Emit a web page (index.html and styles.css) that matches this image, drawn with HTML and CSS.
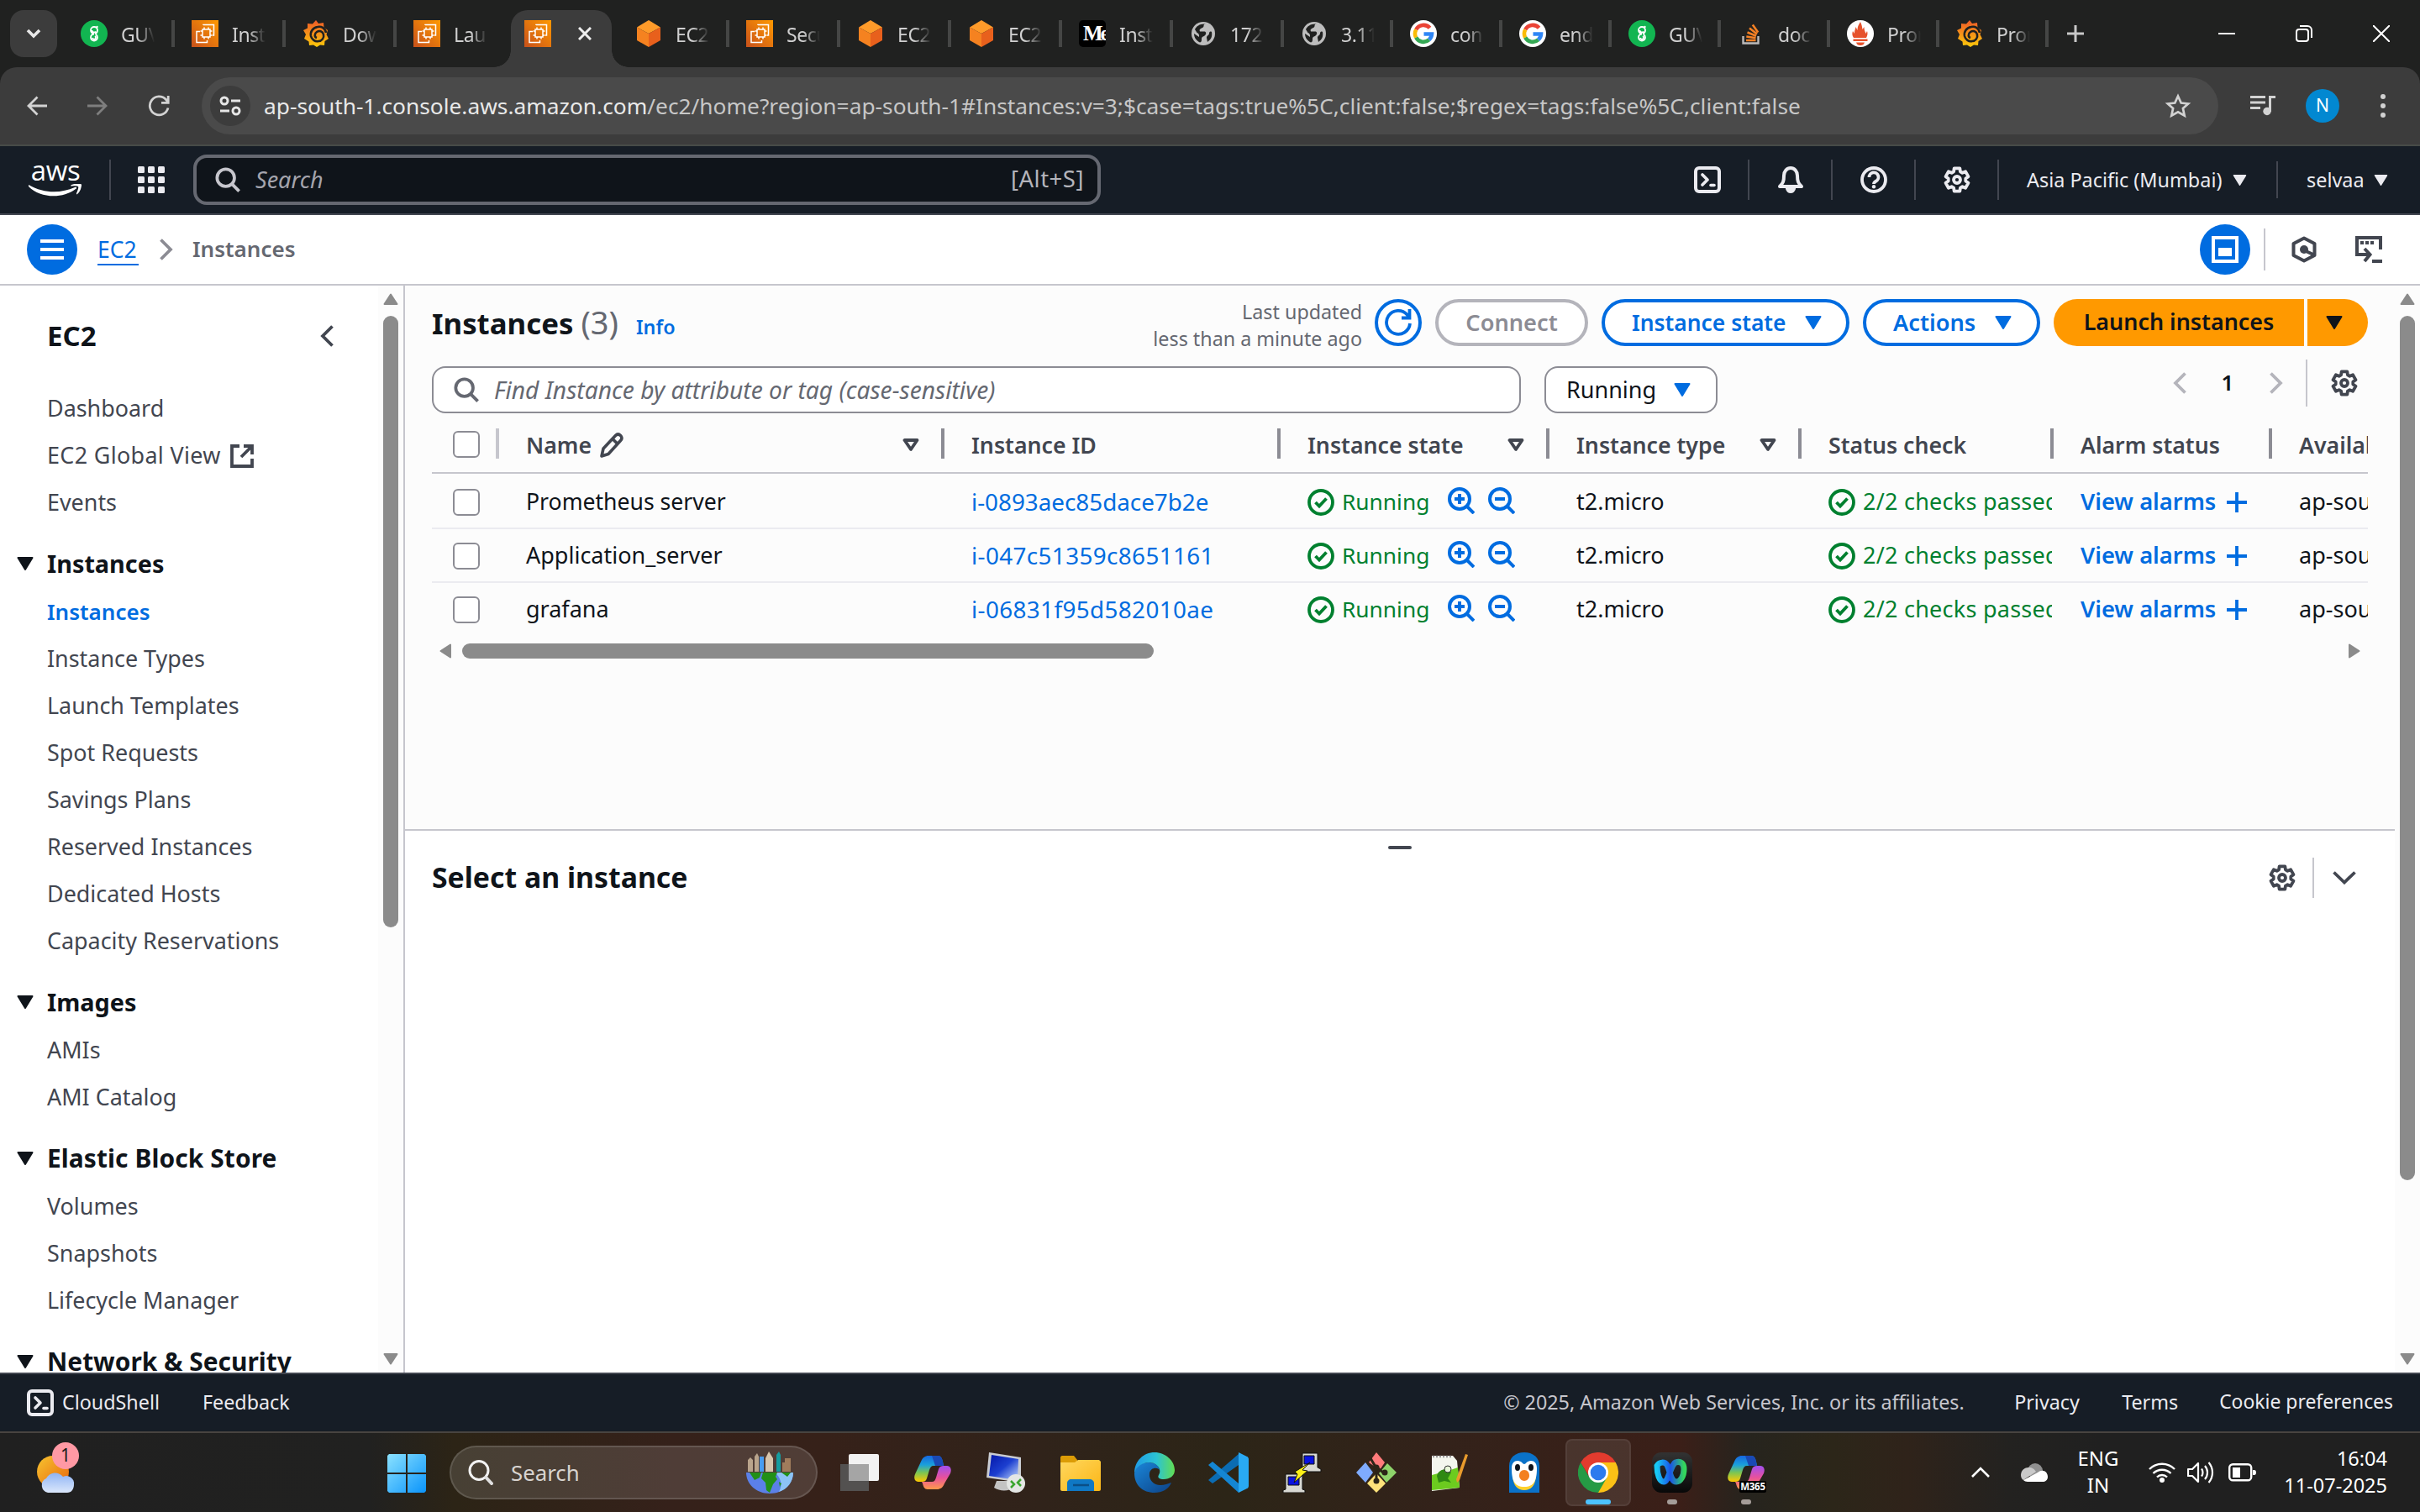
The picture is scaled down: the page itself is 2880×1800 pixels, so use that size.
FILE: index.html
```
<!DOCTYPE html>
<html lang="en">
<head>
<meta charset="utf-8">
<title>Instances | EC2 | ap-south-1</title>
<link rel="stylesheet" href="styles.css">
</head>
<body>
<svg class="defs" width="0" height="0" aria-hidden="true">
  <defs>
    <linearGradient id="gOrange" x1="0" y1="1" x2="1" y2="0"><stop offset="0" stop-color="#c8511b"/><stop offset="1" stop-color="#ff9900"/></linearGradient>
    <linearGradient id="gGraf" x1="0" y1="0" x2="0" y2="1"><stop offset="0" stop-color="#f05a28"/><stop offset="1" stop-color="#fbca0a"/></linearGradient>
    <linearGradient id="gWin" x1="0" y1="0" x2="1" y2="1"><stop offset="0" stop-color="#8be2ff"/><stop offset="1" stop-color="#0a94fb"/></linearGradient>
    <linearGradient id="gSun" x1="0" y1="0" x2="1" y2="1"><stop offset="0" stop-color="#f7c52f"/><stop offset="1" stop-color="#e8650d"/></linearGradient>
    <linearGradient id="gCloud" x1="0" y1="0" x2="0" y2="1"><stop offset="0" stop-color="#8fb4f5"/><stop offset="1" stop-color="#dbe7fb"/></linearGradient>
    <linearGradient id="gCopL" x1="0" y1="0" x2="0" y2="1"><stop offset="0" stop-color="#1667e0"/><stop offset=".35" stop-color="#1aa0dc"/><stop offset=".65" stop-color="#7bc653"/><stop offset="1" stop-color="#ffc800"/></linearGradient>
    <linearGradient id="gCopR" x1="0" y1="0" x2="0" y2="1"><stop offset="0" stop-color="#a14ff0"/><stop offset=".5" stop-color="#e8519c"/><stop offset="1" stop-color="#ff9a4a"/></linearGradient>
    <linearGradient id="gEdge" x1="0" y1="0" x2="1" y2="0"><stop offset="0" stop-color="#1f9be6"/><stop offset=".55" stop-color="#2cc3d4"/><stop offset="1" stop-color="#62dd52"/></linearGradient>
    <linearGradient id="gEdge2" x1="0" y1="0" x2="1" y2="1"><stop offset="0" stop-color="#1a86d9"/><stop offset="1" stop-color="#0d4286"/></linearGradient>
    <linearGradient id="gScreen" x1="0" y1="0" x2="1" y2="1"><stop offset="0" stop-color="#0316a8"/><stop offset=".5" stop-color="#1c3fd0"/><stop offset="1" stop-color="#c5dcff"/></linearGradient>
    <linearGradient id="gFold" x1="0" y1="0" x2="1" y2="1"><stop offset="0" stop-color="#ffd75e"/><stop offset="1" stop-color="#fbb616"/></linearGradient>
    <linearGradient id="gDark" x1="0" y1="0" x2="0" y2="1"><stop offset="0" stop-color="#333"/><stop offset="1" stop-color="#080808"/></linearGradient>
    <linearGradient id="gWebex" x1="0" y1="0" x2="1" y2="0"><stop offset="0" stop-color="#17c9f5"/><stop offset=".5" stop-color="#1a55e8"/><stop offset="1" stop-color="#34d65c"/></linearGradient>
  </defs>
  <symbol id="ec2" viewBox="0 0 32 32"><path fill="url(#gOrange)" d="M0 0h32v32H0z"/><g fill="none" stroke="#fff" stroke-width="1.500"><path d="M13 11h9v9h-9zM15 11V8.500M20 11V8.500M15 22.500V20M20 22.500V20M13 13h-2.500M13 18h-2.500M24.500 13H22M24.500 18H22M14 6V5.500h12.500V18H25M10 13.500H6V26.500h12.500V24"/></g></symbol>
  <symbol id="cube" viewBox="0 0 32 32"><path fill="#ff9b2a" d="M16 0 30 8.500 16 16 2 8.500z"/><path fill="#f58220" d="M2 8.500 16 16v16L2 24z"/><path fill="#e8601c" d="M30 8.500 16 16v16l14-8z"/></symbol>
  <symbol id="guvi" viewBox="0 0 32 32"><circle cx="16" cy="16" r="16" fill="#12b551"/><path fill="none" stroke="#fff" stroke-width="1.800" d="M16 16a4 4 0 1 1 4-4c0 2.500-1 3.600-3 4.300M16 16.500a4 4 0 1 0 4 4c0-1.600-.8-2.800-2-3.500M13.500 12a2.500 2.500 0 0 0 4.500 1.500M14 21a2 2 0 1 0 3-2"/><circle cx="19.500" cy="8" r="1.200" fill="#fff"/></symbol>
  <symbol id="graf" viewBox="0 0 32 32"><path fill="url(#gGraf)" d="m16 0 3 4 6-1 .5 5.500L30 12l-1.500 5L31 22l-4.500 3-.5 5-5-.5L17 32l-4-2.500-5 .5-.5-4.500L2 22l2-5-3-5 5-2.500L6 4l6 .5z"/><path fill="none" stroke="#202120" stroke-width="2.600" d="M28 15c-1-6-6-8-10-7-6 1-9 6-8 11 1 4 5 7 9 6 4 0 7-4 6-8s-5-5-8-3-3 6 0 7"/></symbol>
  <symbol id="globe" viewBox="0 0 28 28"><circle cx="14" cy="14" r="14" fill="#bdbdbd"/><path fill="#202120" d="M17 2.500c-4 0-1 3-4 4.500s-4 2-3 4.500h5c2 0 3 2 1.500 4-1.500 2-4.500 2-4.500 4.500s0 4-2 4.500C6 22.500 3 19 3 14l6 4c.5-3-1-4.500-2.500-5L4 9c2-4 6-7 13-6.500zM19 24c4-3 6-6 5-12-2-1-3 0-3 2-1 3-3 2-3 5z"/></symbol>
  <symbol id="goog" viewBox="0 0 32 32"><circle cx="16" cy="16" r="16" fill="#fff"/><g fill="none" stroke-width="4.600"><path stroke="#ea4335" d="M23.600 9.300A10 10 0 0 0 7.200 11.300"/><path stroke="#fbbc05" d="M7.200 11.300a10 10 0 0 0 0 9.400"/><path stroke="#34a853" d="M7.200 20.700a10 10 0 0 0 15.500 2.600"/><path stroke="#2f86f6" d="M22.700 23.300A10 10 0 0 0 26 16.500H16.500"/></g></symbol>
  <symbol id="so" viewBox="0 0 32 32"><path fill="none" stroke="#bcbbbb" stroke-width="2.400" d="M6.500 19v8.500h18V19"/><g stroke="#f48024" stroke-width="2.600"><path d="M10 24h11.500M10.300 19.500l11.200 1.700M11.500 14.500l10.500 4.300M14 9.500l9 7M17.800 5.500l6.400 9"/></g></symbol>
  <symbol id="prom" viewBox="0 0 32 32"><circle cx="16" cy="16" r="16" fill="#fff"/><path fill="#e6522c" d="M16 30a5 5 0 0 1-5-3.500h10A5 5 0 0 1 16 30zM7.500 22.500h17V25h-17zM8 21c-2-3-2-5-1-8l2 3c0-4 1-5 1.500-8l2 4c0-4 1-6 3.500-10 2 4 2 6 2.500 9l2-3c0 4 1 5 2 8l1.500-3c1 3 .5 5-1 8z"/></symbol>

  <symbol id="gear" viewBox="0 0 16 16"><path fill="none" stroke="currentColor" stroke-width="1.900" stroke-linejoin="round" d="M6.310 1.210H9.690L9.950 3.180 11.200 3.900 13.040 3.140 14.730 6.070 13.150 7.280V8.720L14.730 9.930 13.040 12.860 11.200 12.100 9.950 12.820 9.690 14.790H6.310L6.050 12.820 4.800 12.100 2.960 12.860 1.270 9.930 2.850 8.720V7.280L1.270 6.070 2.960 3.140 4.800 3.900 6.050 3.180Z"/><circle cx="8" cy="8" r="2" fill="none" stroke="currentColor" stroke-width="1.900"/></symbol>
  <symbol id="shell" viewBox="0 0 32 32"><rect x="2" y="2" width="28" height="28" rx="4" fill="none" stroke="currentColor" stroke-width="4"/><path fill="none" stroke="currentColor" stroke-width="3.600" stroke-linecap="round" stroke-linejoin="round" d="m10 10 6 6-6 6"/><path stroke="currentColor" stroke-width="3.600" stroke-linecap="round" d="M20 22.500h4"/></symbol>
  <symbol id="mag" viewBox="0 0 32 32"><circle cx="13.500" cy="13.500" r="11" fill="none" stroke="currentColor" stroke-width="4"/><path stroke="currentColor" stroke-width="4" d="m21.500 21.500 9 9"/></symbol>
  <symbol id="zin" viewBox="0 0 32 32"><circle cx="14" cy="14" r="12" fill="none" stroke="currentColor" stroke-width="4"/><path stroke="currentColor" stroke-width="4" d="m22.500 22.500 8.500 8.500M8 14h12M14 8v12"/></symbol>
  <symbol id="zout" viewBox="0 0 32 32"><circle cx="14" cy="14" r="12" fill="none" stroke="currentColor" stroke-width="4"/><path stroke="currentColor" stroke-width="4" d="m22.500 22.500 8.500 8.500M8 14h12"/></symbol>
  <symbol id="ok" viewBox="0 0 32 32"><circle cx="16" cy="16" r="14" fill="none" stroke="currentColor" stroke-width="3.800"/><path fill="none" stroke="currentColor" stroke-width="3.800" d="m9.500 16 4.500 4.500 8.500-9"/></symbol>
  <symbol id="tri" viewBox="0 0 20 16"><path fill="currentColor" stroke="currentColor" stroke-width="2" stroke-linejoin="round" d="M1.500 1h17L10 15z"/></symbol>
  <symbol id="sort" viewBox="0 0 20 16"><path fill="none" stroke="currentColor" stroke-width="3.800" stroke-linejoin="round" d="M2.500 2h15L10 13z"/></symbol>
  <symbol id="sbtri" viewBox="0 0 18 14"><path fill="currentColor" stroke="currentColor" stroke-width="2" stroke-linejoin="round" d="M1.500 13h15L9 1.500z"/></symbol>
  <symbol id="left" viewBox="0 0 16 26"><path fill="none" stroke="currentColor" stroke-width="3.800" d="M14.500 1.500 3 13l11.500 11.500"/></symbol>
  <symbol id="right" viewBox="0 0 16 26"><path fill="none" stroke="currentColor" stroke-width="3.800" d="M1.500 1.500 13 13 1.500 24.500"/></symbol>
  <symbol id="plus" viewBox="0 0 24 24"><path stroke="currentColor" stroke-width="3.800" d="M0 12h24M12 0v24"/></symbol>
  <symbol id="copilot" viewBox="0 0 48 48"><path fill="url(#gCopL)" d="M19 4h11c4 0 5 3 6 7l1 5H25c-3 0-4 2-5 5l-3 10c-1 3-3 4-6 4H7c-4 0-6-4-4-9L10 11c2-5 5-7 9-7z"/><path fill="#1a49b4" d="M23 4h7c4 0 5 3 6 7l1 5H27z"/><path fill="url(#gCopR)" d="M29 44H18c-4 0-5-3-6-7l-1-2h12c3 0 4-2 5-5l3-10c1-3 3-4 6-4h4c4 0 6 4 4 9l-7 12c-2 5-5 7-9 7z"/></symbol>
</svg>

<header class="tabstrip">
  <div class="tabmenu"><svg width="18" height="12" viewBox="0 0 18 12"><path fill="none" stroke="#e8e8e8" stroke-width="3.600" d="m2 2 7 7 7-7"/></svg></div>
  <div class="tab"><svg class="fav"><use href="#guvi"/></svg><span>GUVI</span></div>
  <div class="tab"><svg class="fav"><use href="#ec2"/></svg><span>Insta</span></div>
  <div class="tab"><svg class="fav"><use href="#graf"/></svg><span>Dow</span></div>
  <div class="tab nosep"><svg class="fav"><use href="#ec2"/></svg><span>Laun</span></div>
  <div class="tab active"><svg class="fav"><use href="#ec2"/></svg><svg class="close" viewBox="0 0 16 16"><path stroke="#eee" stroke-width="3" d="m1 1 14 14M15 1 1 15"/></svg></div>
  <div class="tab"><svg class="fav"><use href="#cube"/></svg><span>EC2 </span></div>
  <div class="tab"><svg class="fav"><use href="#ec2"/></svg><span>Secu</span></div>
  <div class="tab"><svg class="fav"><use href="#cube"/></svg><span>EC2 </span></div>
  <div class="tab"><svg class="fav"><use href="#cube"/></svg><span>EC2 </span></div>
  <div class="tab"><b class="medium">Me</b><span>Insta</span></div>
  <div class="tab"><svg class="fav pad"><use href="#globe"/></svg><span>172.</span></div>
  <div class="tab slim"><svg class="fav pad"><use href="#globe"/></svg><span>3.110</span></div>
  <div class="tab slim"><svg class="fav"><use href="#goog"/></svg><span>conn</span></div>
  <div class="tab slim"><svg class="fav"><use href="#goog"/></svg><span>endp</span></div>
  <div class="tab slim"><svg class="fav"><use href="#guvi"/></svg><span>GUVI</span></div>
  <div class="tab slim"><svg class="fav"><use href="#so"/></svg><span>dock</span></div>
  <div class="tab slim"><svg class="fav"><use href="#prom"/></svg><span>Prom</span></div>
  <div class="tab slim"><svg class="fav"><use href="#graf"/></svg><span>Prom</span></div>
  <svg class="newtab" width="20" height="20" viewBox="0 0 20 20"><path stroke="#c8c8c8" stroke-width="3" d="M0 10h20M10 0v20"/></svg>
  <div class="wincontrols">
    <svg width="20" height="20" viewBox="0 0 20 20"><path stroke="#fff" stroke-width="2" d="M0 10h20"/></svg>
    <svg width="20" height="20" viewBox="0 0 20 20"><rect x="1" y="5" width="14" height="14" rx="3" fill="none" stroke="#fff" stroke-width="2"/><path fill="none" stroke="#fff" stroke-width="2" d="M5 1h9a5 5 0 0 1 5 5v9"/></svg>
    <svg width="20" height="20" viewBox="0 0 20 20"><path stroke="#fff" stroke-width="2" d="m0 0 20 20M20 0 0 20"/></svg>
  </div>
</header>

<div class="toolbarwrap"><div class="toolbar">
  <div class="navbtns">
    <svg width="24" height="24" viewBox="0 0 24 24"><path fill="none" stroke="#d2d2d2" stroke-width="2.800" d="M24 12H2M12.500 1.500 2 12l10.500 10.500"/></svg>
    <svg width="24" height="24" viewBox="0 0 24 24"><path fill="none" stroke="#7e7e7e" stroke-width="2.800" d="M0 12h22M11.500 1.500 22 12 11.500 22.500"/></svg>
    <svg width="26" height="26" viewBox="0 0 26 26"><path fill="none" stroke="#d2d2d2" stroke-width="2.800" d="M24 15.500A11 11 0 1 1 21.500 5.500L24 8.500M24.200 1v8.300H16"/></svg>
  </div>
  <div class="omnibox">
    <div class="site"><svg width="26" height="24" viewBox="0 0 26 24"><g fill="none" stroke="#e6e6e6" stroke-width="3"><circle cx="6" cy="6" r="4"/><circle cx="20" cy="18" r="4"/><path d="M14 6h11M1 18h11"/></g></svg></div>
    <div class="url"><b>ap-south-1.console.aws.amazon.com</b>/ec2/home?region=ap-south-1#Instances:v=3;$case=tags:true%5C,client:false;$regex=tags:false%5C,client:false</div>
    <svg width="32" height="30" viewBox="0 0 32 30"><path fill="none" stroke="#d2d2d2" stroke-width="2.700" stroke-linejoin="miter" d="m16 3.500 3.700 8 8.500.9-6.300 5.700 1.800 8.500L16 22.300l-7.700 4.300 1.800-8.500-6.300-5.700 8.500-.9z"/></svg>
  </div>
  <svg class="media" width="30" height="24" viewBox="0 0 30 24"><path stroke="#d2d2d2" stroke-width="3" fill="none" d="M0 1.500h18M0 8h18M0 14.500h12M23.500 19V1.500H30"/><circle cx="20" cy="18.500" r="4.700" fill="#d2d2d2"/></svg>
  <div class="avatar">N</div>
  <svg class="dots" width="6" height="28" viewBox="0 0 6 28"><g fill="#d2d2d2"><circle cx="3" cy="3" r="3"/><circle cx="3" cy="14" r="3"/><circle cx="3" cy="25" r="3"/></g></svg>
</div></div>

<nav class="awsnav">
  <div class="awslogo"><span>aws</span><svg width="64" height="16" viewBox="0 0 64 16"><path fill="#fff" d="M0 1c19 11 39 10 55 3 2-1 3 1 1 2C40 18 14 17 0 3c-1-1-1-2 0-2zM51 1c5-2 12-2 12 0s-1 8-5 11c-1 1-1 0-1-1 1-2 3-7 2-8s-5-1-8-.5c-1 0-1-1 0-1.500z"/></svg></div>
  <i class="vr"></i>
  <svg class="apps" width="32" height="32" viewBox="0 0 32 32"><g fill="#ebebf0"><rect width="8" height="8" rx="1.500"/><rect x="12" width="8" height="8" rx="1.500"/><rect x="24" width="8" height="8" rx="1.500"/><rect y="12" width="8" height="8" rx="1.500"/><rect x="12" y="12" width="8" height="8" rx="1.500"/><rect x="24" y="12" width="8" height="8" rx="1.500"/><rect y="24" width="8" height="8" rx="1.500"/><rect x="12" y="24" width="8" height="8" rx="1.500"/><rect x="24" y="24" width="8" height="8" rx="1.500"/></g></svg>
  <div class="awssearch"><svg width="30" height="30"><use href="#mag"/></svg><em>Search</em><span>[Alt+S]</span></div>
  <div class="awstools">
    <svg class="ic"><use href="#shell"/></svg><i class="vr"></i>
    <svg class="ic" viewBox="0 0 32 32"><path fill="none" stroke="currentColor" stroke-width="4" stroke-linejoin="round" d="M3 24c4-4 5-6 5-13 0-5 3.500-9 8-9s8 4 8 9c0 7 1 9 5 13z"/><path fill="currentColor" d="M10 25h12v2c-1 3-3 5-6 5s-5-2-6-5z"/></svg><i class="vr"></i>
    <svg class="ic" viewBox="0 0 32 32"><circle cx="16" cy="16" r="14" fill="none" stroke="currentColor" stroke-width="3.800"/><path fill="none" stroke="currentColor" stroke-width="3.800" d="M10.500 13a5.500 5.500 0 1 1 8 4.700c-2 1-2.500 1.600-2.500 3.300"/><circle cx="16" cy="24.300" r="2.200" fill="currentColor"/></svg><i class="vr"></i>
    <svg class="ic"><use href="#gear"/></svg><i class="vr"></i>
    <span class="region">Asia Pacific (Mumbai)</span><svg class="navtri"><use href="#tri"/></svg><i class="vr wide"></i>
    <span class="user">selvaa</span><svg class="navtri"><use href="#tri"/></svg>
  </div>
</nav>

<div class="crumbs">
  <div class="round"><svg width="28" height="24" viewBox="0 0 28 24"><path stroke="#fff" stroke-width="4" d="M0 2h28M0 12h28M0 22h28"/></svg></div>
  <a>EC2</a>
  <svg class="sep" width="16" height="26"><use href="#right"/></svg>
  <strong>Instances</strong>
  <div class="crumbtools">
    <div class="round"><svg width="32" height="32" viewBox="0 0 32 32"><rect x="2" y="2" width="28" height="28" fill="none" stroke="#fff" stroke-width="4"/><path fill="#fff" d="M8 14h16v10H8z"/></svg></div>
    <i class="vr light"></i>
    <svg width="30" height="32" viewBox="0 0 30 32"><path fill="none" stroke="#424650" stroke-width="4" stroke-linejoin="round" d="M15 2.500 27.500 9v14L15 29.500 2.500 23V9z"/><circle cx="15" cy="16" r="5" fill="#424650"/><path stroke="#424650" stroke-width="4" d="m15 17 11 5"/></svg>
    <svg class="term" width="32" height="32" viewBox="0 0 32 32"><path fill="none" stroke="#424650" stroke-width="4" d="M30 16V2H2v20h15M11 15l6.500 7-6.500 8"/><path fill="#424650" d="M6 6h4v4H6zM12 6h4v4h-4zM18 6h4v4h-4zM20 28h12v4H20z"/></svg>
  </div>
</div>

<main class="content">
  <aside class="side">
    <div class="sidebody">
      <div class="sidehead"><h2>EC2</h2><svg width="16" height="26"><use href="#left"/></svg></div>
      <a>Dashboard</a>
      <a class="global">EC2 Global View <svg class="ext" width="28" height="28" viewBox="0 0 28 28"><path fill="none" stroke="currentColor" stroke-width="3.800" d="M11 2H2v24h24V17M16 2h10v10M26 2 13 15"/></svg></a>
      <a>Events</a>
      <h3><svg><use href="#tri"/></svg><span class="tight">Instances</span></h3>
      <a class="on">Instances</a><a>Instance Types</a><a>Launch Templates</a><a>Spot Requests</a><a>Savings Plans</a><a>Reserved Instances</a><a>Dedicated Hosts</a><a>Capacity Reservations</a>
      <h3><svg><use href="#tri"/></svg><span class="tight">Images</span></h3>
      <a>AMIs</a><a>AMI Catalog</a>
      <h3><svg><use href="#tri"/></svg><span class="loose">Elastic Block Store</span></h3>
      <a>Volumes</a><a>Snapshots</a><a>Lifecycle Manager</a>
      <h3><svg><use href="#tri"/></svg><span>Network &amp; Security</span></h3>
    </div>
    <div class="vscroll"><svg><use href="#sbtri"/></svg><div class="track"><div class="thumb short"></div></div><svg class="down"><use href="#sbtri"/></svg></div>
  </aside>

  <section class="pane">
    <div class="upper">
      <div class="titlebar">
        <h1>Instances <span>(3)</span></h1><a class="info">Info</a>
        <div class="updated">Last updated<br>less than a minute ago</div>
        <div class="btn refresh"><svg width="34" height="34" viewBox="0 0 34 34"><path fill="none" stroke="currentColor" stroke-width="3.800" d="M31 18a14 14 0 1 1-3.500-10.500L30 10.500M30.500 1v10.500H21"/></svg></div>
        <div class="btn off">Connect</div>
        <div class="btn">Instance state<svg><use href="#tri"/></svg></div>
        <div class="btn actions">Actions<svg><use href="#tri"/></svg></div>
        <div class="launch"><span>Launch instances</span><span class="more"><svg><use href="#tri"/></svg></span></div>
      </div>
      <div class="filters">
        <div class="field find"><svg width="30" height="30"><use href="#mag"/></svg><em>Find Instance by attribute or tag (case-sensitive)</em></div>
        <div class="field pick">Running<svg><use href="#tri"/></svg></div>
        <div class="pager"><svg width="16" height="26"><use href="#left"/></svg><b>1</b><svg width="16" height="26"><use href="#right"/></svg><i></i><svg class="cog" width="32" height="32"><use href="#gear"/></svg></div>
      </div>
      <div class="table">
        <div class="tr th">
          <div class="check"><i></i></div>
          <div>Name<svg class="pen" width="28" height="30" viewBox="0 0 28 30"><path fill="none" stroke="currentColor" stroke-width="3.600" stroke-linejoin="round" d="M2 28l2-9L18.500 3.500c2-2 4-2 6 0s2 4 0 6L10 25.500zM15 7.500l6 6"/></svg><svg class="sort"><use href="#sort"/></svg></div>
          <div>Instance ID</div>
          <div>Instance state<svg class="sort"><use href="#sort"/></svg></div>
          <div>Instance type<svg class="sort"><use href="#sort"/></svg></div>
          <div>Status check</div><div>Alarm status</div><div>Availability Zone</div>
        </div>
        <div class="tr first">
          <div class="check"><i></i></div><div class="nm">Prometheus server</div><div class="id">i-0893aec85dace7b2e</div>
          <div class="state"><svg><use href="#ok"/></svg>Running<svg class="z1"><use href="#zin"/></svg><svg class="z2"><use href="#zout"/></svg></div>
          <div>t2.micro</div><div class="good"><svg><use href="#ok"/></svg>2/2 checks passed</div>
          <div class="alarm">View alarms<svg><use href="#plus"/></svg></div><div>ap-south-1a</div>
        </div>
        <div class="tr">
          <div class="check"><i></i></div><div>Application_server</div><div class="id digits">i-047c51359c8651161</div>
          <div class="state"><svg><use href="#ok"/></svg>Running<svg class="z1"><use href="#zin"/></svg><svg class="z2"><use href="#zout"/></svg></div>
          <div>t2.micro</div><div class="good"><svg><use href="#ok"/></svg>2/2 checks passed</div>
          <div class="alarm">View alarms<svg><use href="#plus"/></svg></div><div>ap-south-1a</div>
        </div>
        <div class="tr last">
          <div class="check"><i></i></div><div>grafana</div><div class="id digits">i-06831f95d582010ae</div>
          <div class="state"><svg><use href="#ok"/></svg>Running<svg class="z1"><use href="#zin"/></svg><svg class="z2"><use href="#zout"/></svg></div>
          <div>t2.micro</div><div class="good"><svg><use href="#ok"/></svg>2/2 checks passed</div>
          <div class="alarm">View alarms<svg><use href="#plus"/></svg></div><div>ap-south-1a</div>
        </div>
      </div>
      <div class="hscroll"><svg width="14" height="18" viewBox="0 0 14 18"><path fill="#8b8b8b" stroke="#8b8b8b" stroke-width="2" stroke-linejoin="round" d="M13 1.500v15L1.500 9z"/></svg><div class="hthumb"></div><svg width="14" height="18" viewBox="0 0 14 18"><path fill="#8b8b8b" stroke="#8b8b8b" stroke-width="2" stroke-linejoin="round" d="M1 1.500v15L12.500 9z"/></svg></div>
    </div>
    <div class="split">
      <i class="grip"></i>
      <div class="splithead"><h2>Select an instance</h2><svg width="32" height="32"><use href="#gear"/></svg><i></i><svg width="28" height="16" viewBox="0 0 28 16"><path fill="none" stroke="currentColor" stroke-width="3.800" d="m1.500 1.500 12.500 12 12.500-12"/></svg></div>
    </div>
  </section>
  <div class="vscroll page"><svg><use href="#sbtri"/></svg><div class="track"><div class="thumb long"></div></div><svg class="down"><use href="#sbtri"/></svg></div>
</main>

<footer class="awsfoot">
  <svg width="32" height="32"><use href="#shell"/></svg><span class="cs">CloudShell</span><span class="fb">Feedback</span>
  <span class="copy">© 2025, Amazon Web Services, Inc. or its affiliates.</span>
  <span class="pr">Privacy</span><span class="te">Terms</span><span class="co">Cookie preferences</span>
</footer>

<div class="taskbar">
  <div class="weather"><svg width="48" height="48" viewBox="0 0 48 48"><circle cx="19" cy="23" r="19" fill="url(#gSun)"/><path fill="url(#gCloud)" d="M13 48a9 9 0 0 1-2-17 12 12 0 0 1 20-2 9 9 0 0 1 13 9c0 6-3 10-8 10z"/></svg><b>1</b></div>
  <svg class="start" width="46" height="46" viewBox="0 0 46 46"><path fill="url(#gWin)" d="M2 0h20v22H0V2zM24 0h20l2 2v20H24zM0 24h22v22H2l-2-2zM24 24h22v20l-2 2H24z"/></svg>
  <div class="tasksearch"><svg width="30" height="30" viewBox="0 0 30 30"><circle cx="13" cy="12.500" r="11" fill="none" stroke="#f2f2f2" stroke-width="3"/><path stroke="#e0e0e0" stroke-width="4" stroke-linecap="round" d="m21.500 21 6.500 7"/></svg><span>Search</span>
    <svg class="earth" width="56" height="50" viewBox="0 0 56 50"><path fill="#b9a48c" d="M2 24V10l3-3 3 3v14zM10 24V6l3-4 2 4v18z"/><path fill="#4a9df0" d="M16 24V6h5v18z"/><path fill="#d8c5ac" d="M23 24V8l4-8 5 8v16z"/><path fill="#159c9f" d="M36 24V4l3-4 2 4v20z"/><path fill="#a07c5c" d="M43 24V13h3V8h7v16z"/><path fill="#5b80e8" d="M0 25h56c0 14-12 25-28 25S0 39 0 25z"/><path fill="#8cc3f5" d="M34 25h22c0 11-7 20-17 23 5-9 2-17-5-23z"/><path fill="#229018" d="M4 25h14l-2 6-6 3zM20 25h17l-2 5 2 3-5 6-4 10-4-3-1-9-5-5zM42 25h11l-4 5zM39 36l3 2-2 4z"/></svg>
  </div>
  <div class="apps-row">
    <div class="app"><svg viewBox="0 0 48 48"><rect x="12" y="2" width="36" height="32" rx="2" fill="#f2f2f2"/><path fill="#565656" fill-opacity=".9" d="M2 14h10v20h24v12H2z"/><path fill="#a5a5a5" d="M12 14h24v20H12z"/></svg></div>
    <div class="app"><svg viewBox="0 0 48 48"><use href="#copilot"/></svg></div>
    <div class="app"><svg viewBox="0 0 48 48"><path fill="#c9ccd2" d="M3 0 41 6v30L0 30z"/><path fill="url(#gScreen)" d="m6 3 32 5-1 25L3 28z"/><path fill="#c3c3c3" d="M12 34h18l2 8c-4 4-16 5-23 0z"/><circle cx="35" cy="37" r="11" fill="#e4e6e4"/><path fill="none" stroke="#3aa52e" stroke-width="2.500" d="m29 34 4 4-4 4M41 32l-4 4 4 4"/></svg></div>
    <div class="app"><svg viewBox="0 0 48 48"><path fill="#dc9c06" d="M0 6c0-1 1-2 2-2h14l4 5v6H0z"/><path fill="url(#gFold)" d="M0 12h17l4-3h25l2 2v33c0 1-1 2-2 2H2c-1 0-2-1-2-2z"/><path fill="#0f78c4" d="M8 46V37c0-3 2-5 5-5h21c4 0 6 2 6 5v9z"/><path stroke="#0b4f86" stroke-width="2.500" d="M15 39h19"/></svg></div>
    <div class="app"><svg viewBox="0 0 48 48"><path fill="url(#gEdge2)" d="M0 25C2 16 9 12 17 12c8 0 12 4 13 9-3-4-11-3-12 4-1 8 5 14 13 14 5 0 9-2 13-3-3 8-11 12-20 12C10 48 0 39 0 25z"/><path fill="url(#gEdge)" d="M0 25C0 10 11 0 24 0s24 10 24 21c0 7-6 11-13 11-5 0-8-2-6-5 4-6-1-15-12-15C10 12 2 17 0 25z"/></svg></div>
    <div class="app"><svg viewBox="0 0 48 48"><path fill="#0b6cb3" d="m36 2-36 31 5 4 31-22z"/><path fill="#1486d3" d="m0 15 5-4 31 26v11z"/><path fill="#29a9f3" d="m36 0 10 5c1 0 2 2 2 3v32c0 1-1 3-2 3l-10 5z"/></svg></div>
    <div class="app"><svg viewBox="0 0 48 48"><g stroke="#111" stroke-width="1"><path fill="#d9d9d3" d="M24 1h18v17l4 2v3H22v-3l2-2zM4 26h20v18l3 1v3H1v-3l3-1z"/><path fill="#0a13e0" d="M26 4h12v10H26zM7 29h13v10H7z"/><path fill="#ffef17" d="M33 12 15 23l3 3-4 10 16-14-6-1z"/></g></svg></div>
    <div class="app"><svg viewBox="0 0 48 48"><path fill="#ff7b7b" d="m24 0 10 12-6 9-13-9z"/><path fill="#7fabff" d="M11 12 0 24l11 12 9-12z"/><path fill="#8ed36a" d="m37 13 11 11-12 12-9-11z"/><path fill="#ffe27a" d="m24 25 11 12-11 11-11-11z"/><path fill="none" stroke="#2b2417" stroke-width="3" d="m17 7 7 12v17M24 17l9 8"/><g fill="#2b2417"><circle cx="24" cy="18" r="3.500"/><circle cx="24" cy="34" r="3.500"/><circle cx="34" cy="24" r="3.500"/></g></svg></div>
    <div class="app"><svg viewBox="0 0 48 48"><path fill="#f4f6ee" d="M2 4h25l5 6 3 32-33 4z"/><path fill="#6ccb1f" d="M2 27c10-3 20-5 31-9l2 24-33 3z"/><path stroke="#999" stroke-width="2.500" stroke-dasharray="2 2" d="M3 5h24"/><path fill="#2f8912" d="M8 28c2-9 14-10 17-4l-4 7 4 5-8-2-7 2z"/><circle cx="21" cy="20" r="4" fill="#e8f8d8" stroke="#333"/><path fill="#e99b2c" d="m42 2 3 1-10 30-3 3-1-4z"/></svg></div>
    <div class="app"><svg viewBox="0 0 48 48"><path fill="#0a72c9" d="M6 48V16C6 6 14 0 24 0s18 6 18 16v32z"/><path fill="#ffd02b" d="M10 28c1 12 6 17 14 17s13-5 14-17z"/><path fill="#fff" d="M9 19c0-6 3-9 7-9 5 0 6 4 8 4s3-4 8-4c4 0 7 3 7 9 0 14-3 22-15 22S9 33 9 19z"/><ellipse cx="16" cy="18" rx="3" ry="4" fill="#10141c"/><ellipse cx="32" cy="18" rx="3" ry="4" fill="#10141c"/><path fill="#f38020" d="M24 21c4 0 6 3 6 7 0 3-3 6-6 6s-6-3-6-6c0-4 2-7 6-7z"/></svg></div>
    <div class="app current"><svg viewBox="0 0 48 48"><path fill="#fbc116" d="M24 12h20.800A24 24 0 0 1 23 48z"/><path fill="#269a45" d="M3.200 12 13.600 30 34.400 30 24 48A24 24 0 0 1 3.200 12z"/><path fill="#e33b2e" d="M3.200 12A24 24 0 0 1 44.800 12H24v5l-10 13z"/><circle cx="24" cy="24" r="12" fill="#fff"/><circle cx="24" cy="24" r="9.300" fill="#2c7bee"/></svg><i></i></div>
    <div class="app"><svg viewBox="0 0 48 48"><rect width="48" height="48" rx="11" fill="url(#gDark)"/><path fill="none" stroke="url(#gWebex)" stroke-width="7" stroke-linecap="round" d="M6 16c0 10 3 19 8 19 6 0 8-20 14-23 6-2 10 1 10 8 0 8-4 15-9 15-7 0-7-12-11-20-3-4-9-4-12 1z"/></svg><i></i></div>
    <div class="app"><svg viewBox="0 0 48 48"><use href="#copilot"/></svg><b>M365</b><i></i></div>
  </div>
  <div class="tray">
    <svg width="22" height="14" viewBox="0 0 22 14"><path fill="none" stroke="#fff" stroke-width="2.600" d="m1 12 10-10 10 10"/></svg>
    <svg class="od" width="32" height="22" viewBox="0 0 32 22"><circle cx="17" cy="9" r="9" fill="#909090"/><path fill="#c9c9c9" d="M0 14c0-6 5-9 9-9 5 0 7 2 9 5L3 20c-2-1-3-4-3-6z"/><path fill="#fff" d="M3 20 20 11c6-5 12-1 12 5 0 4-3 6-6 6H8c-2 0-4-1-5-2z"/></svg>
    <div class="lang">ENG<br>IN</div>
    <svg class="wifi" width="32" height="24" viewBox="0 0 32 24"><g fill="none" stroke="#fff" stroke-width="2.400"><path d="M1 8a21 21 0 0 1 30 0M5.500 13a15 15 0 0 1 21 0M10 17.500a8.500 8.500 0 0 1 12 0"/></g><circle cx="16" cy="21" r="3" fill="#fff"/></svg>
    <svg class="vol" width="34" height="26" viewBox="0 0 34 26"><g fill="none" stroke="#fff" stroke-width="2.200" stroke-linejoin="round"><path d="M1 9h5l7-7v22l-7-7H1zM17 8.500c2 2.500 2 6.500 0 9M21 5c4 4.500 4 11.500 0 16M25.500 1c6 7 6 17 0 24"/></g></svg>
    <svg class="bat" width="34" height="22" viewBox="0 0 34 22"><rect x="1.200" y="1.200" width="26" height="19" rx="4" fill="none" stroke="#fff" stroke-width="2.400"/><path fill="#fff" d="M5 5h9v12H5zM29 8h2c1 0 2 1 2 3s-1 3-2 3h-2z"/></svg>
    <div class="clock">16:04<br>11-07-2025</div>
  </div>
</div>
</body>
</html>
```
FILE: styles.css
```
* { box-sizing: border-box; }
html, body { margin: 0; }
body {
  width: 2880px; height: 1800px; overflow: hidden;
  display: flex; flex-direction: column;
  font: 27px/1 "Noto Sans", "Open Sans", sans-serif;
  color: #0f141a; background: #fff;
}
svg { display: block; flex: none; }
.defs { position: absolute; }
h1, h2, h3 { margin: 0; }
i { font-style: normal; flex: none; }

/* Browser tab strip */
.tabstrip { height: 80px; background: #202120; display: flex; align-items: center; flex: none; }
.tabmenu { width: 56px; height: 56px; margin: 0 8px 0 12px; border-radius: 16px; background: #3c3c3c; display: flex; align-items: center; justify-content: center; }
.tab { width: 132px; height: 32px; padding-left: 20px; border-right: 4px solid #454645; display: flex; align-items: center; gap: 16px; flex: none; }
.tab.slim { width: 130px; }
.tab.nosep { border-right-color: transparent; }
.tab span { width: 40px; height: 34px; line-height: 36px; overflow: hidden; white-space: nowrap; font-size: 23px; letter-spacing: -.4px; color: #d0d0d0; -webkit-mask-image: linear-gradient(90deg, #000 50%, transparent); mask-image: linear-gradient(90deg, #000 50%, transparent); }
.fav { width: 32px; height: 32px; }
.fav.pad { padding: 2px; }
.medium { width: 32px; height: 32px; padding-left: 5px; border-radius: 5px; background: #000; color: #fff; overflow: hidden; font: bold 25px/32px "Liberation Serif", serif; letter-spacing: -3px; flex: none; }
.tab.active { width: 120px; height: 68px; align-self: flex-end; margin: 0 8px 0 4px; padding-left: 16px; border: 0; gap: 32px; border-radius: 20px 20px 0 0; background: #3c3c3c; position: relative; }
.tab.active .fav, .tab.active .close { margin-top: -12px; }
.tab.active .close { width: 16px; height: 16px; }
.tab.active::before, .tab.active::after { content: ""; position: absolute; bottom: 0; width: 20px; height: 20px; }
.tab.active::before { left: -20px; background: radial-gradient(circle at 0 0, transparent 19.5px, #3c3c3c 20px); }
.tab.active::after { right: -20px; background: radial-gradient(circle at 100% 0, transparent 19.5px, #3c3c3c 20px); }
.newtab { margin-left: 22px; }
.wincontrols { margin: 0 36px 0 auto; display: flex; gap: 72px; }

/* Browser toolbar */
.toolbarwrap { height: 94px; background: #202120; flex: none; }
.toolbar { height: 94px; background: #3c3c3c; border-bottom: 2px solid #474b48; border-radius: 20px 20px 0 0; display: flex; align-items: center; }
.navbtns { width: 240px; padding-left: 32px; display: flex; align-items: center; gap: 48px; }
.omnibox { width: 2400px; height: 68px; border-radius: 34px; background: #4a4a4a; display: flex; align-items: center; padding: 0 32px 0 10px; }
.site { width: 48px; height: 48px; border-radius: 50%; background: #3c3c3c; display: flex; align-items: center; justify-content: center; }
.url { flex: 1; margin-left: 16px; font-size: 26.3px; line-height: 48px; color: #c7c7c7; white-space: nowrap; }
.url b { font-weight: 400; color: #e9e9e9; }
.media { margin-left: 38px; }
.avatar { width: 40px; height: 40px; margin-left: 36px; border-radius: 50%; background: #0288d1; color: #fff; font-size: 21px; line-height: 39px; text-align: center; }
.dots { margin-left: 49px; }

/* AWS navigation */
.awsnav { height: 82px; flex: none; background: #161d26; border-bottom: 2px solid #424650; display: flex; align-items: center; color: #ebebf0; }
.awslogo { width: 64px; margin-left: 34px; height: 42px; display: flex; flex-direction: column; align-items: center; }
.awslogo span { font: 500 33px/26px "Open Sans", sans-serif; height: 28px; margin-top: -3px; letter-spacing: -.3px; color: #fff; }
.awslogo svg { margin-top: 1px; }
.vr { width: 2px; height: 48px; background: #424650; }
.awslogo + .vr { margin-left: 32px; }
.apps { margin-left: 32px; }
.awssearch { width: 1080px; height: 60px; margin-left: 34px; padding: 0 16px 0 22px; border: 4px solid #656871; border-radius: 16px; background: #0f141a; display: flex; align-items: center; color: #c6c6cd; line-height: 44px; }
.awssearch em { margin-left: 18px; font-size: 27px; color: #a4a4ad; }
.awssearch span { margin-left: auto; font-size: 27.5px; letter-spacing: .5px; padding-bottom: 3px; color: #b4b4bb; }
.awstools { margin: 0 38px 0 auto; display: flex; align-items: center; }
.ic { width: 32px; height: 32px; }
.awstools .vr { margin: 0 33px 0 32px; }
.awstools span { font-size: 23.4px; line-height: 40px; padding-bottom: 1px; white-space: nowrap; }
.region { width: 245px; }
.user { width: 80px; }
.navtri { width: 17px; height: 13px; }
.awstools .vr.wide { margin: 0 34px 0 35px; height: 44px; }

/* Breadcrumbs */
.crumbs { height: 84px; flex: none; border-bottom: 2px solid #c6c6cd; padding-left: 32px; display: flex; align-items: center; color: #656871; }
.round { width: 60px; height: 60px; border-radius: 50%; background: #006ce0; display: flex; align-items: center; justify-content: center; }
.crumbs a { width: 49px; margin: 2px 0 0 24px; font-size: 26.5px; line-height: 34px; color: #006ce0; border-bottom: 2px solid #006ce0; }
.crumbs .sep { margin: 0 23px 0 25px; color: #8c8c94; }
.crumbs strong { font-size: 26px; line-height: 40px; font-weight: 600; padding-bottom: 2px; }
.crumbtools { margin: 0 45px 0 auto; display: flex; align-items: center; }
.vr.light { height: 50px; background: #c6c6cd; margin: 0 31px 0 16px; }
.term { margin-left: 46px; }

/* Content */
.content { height: 1294px; flex: none; display: flex; overflow: hidden; }
.side { width: 482px; border-right: 2px solid #c6c6cd; display: flex; flex: none; }
.sidebody { width: 450px; padding-left: 56px; overflow: hidden; color: #424650; }
.sidehead { height: 118px; padding: 2px 53px 0 0; display: flex; align-items: center; justify-content: space-between; }
.sidehead h2 { font-size: 33px; line-height: 60px; color: #0f141a; }
.side a { height: 56px; line-height: 56px; display: flex; align-items: center; white-space: nowrap; font-size: 26.9px; }
.side a.on { color: #006ce0; font-weight: 600; font-size: 26px; }
.side a.global { letter-spacing: .35px; }
.ext { margin: 2px 0 0 11px; }
.side h3 { height: 58px; margin: 16px 0 0 -36px; display: flex; align-items: center; gap: 16px; font-size: 29.9px; line-height: 58px; color: #0f141a; white-space: nowrap; }
.side h3 svg { width: 20px; height: 16px; }
.tight { font-size: 28.8px; }
.loose { letter-spacing: .1px; }
.vscroll { width: 30px; height: 1294px; padding: 9px 6px 9px; background: #fcfcfc; color: #8b8b8b; display: flex; flex-direction: column; flex: none; }
.vscroll svg { width: 18px; height: 14px; }
.vscroll .down { transform: rotate(180deg); }
.track { flex: 1; padding-top: 13px; }
.thumb { width: 18px; border-radius: 9px; background: #8b8b8b; }
.short { height: 728px; }
.long { height: 1029px; }

.pane { width: 2368px; display: flex; flex-direction: column; }
.upper { height: 647px; background: #fcfcfc; padding: 16px 32px 0; }
.titlebar { height: 56px; display: flex; align-items: center; }
h1 { width: 243px; font-size: 34.8px; line-height: 56px; white-space: nowrap; padding-bottom: 1px; }
h1 span { font-weight: 400; color: #656871; font-size: 38px; }
.info { font-size: 23.3px; line-height: 40px; font-weight: 600; color: #006ce0; padding-top: 9px; }
.updated { margin: 5px 15px 0 auto; font-size: 23.3px; line-height: 32px; text-align: right; color: #656871; }
.btn { width: 295px; height: 56px; padding: 0 29px 1px 32px; margin-right: 16px; border: 4px solid #006ce0; border-radius: 28px; background: #fff; color: #006ce0; font-weight: 600; font-size: 26.4px; line-height: 46px; display: flex; align-items: center; white-space: nowrap; }
.btn > svg { width: 20px; height: 16px; margin-left: auto; margin-top: 1px; }
.btn.actions { width: 211px; padding-right: 30px; font-size: 27.2px; }
.btn.off { width: 182px; padding: 0 0 1px; justify-content: center; border-color: #b4b4bb; color: #8c8c94; font-size: 27.2px; }
.btn.refresh { width: 56px; padding: 0; justify-content: center; }
.btn.refresh svg { width: 34px; height: 34px; margin: 0; }
.launch { width: 374px; height: 56px; display: flex; gap: 4px; border-radius: 28px; overflow: hidden; font-weight: 600; font-size: 26.9px; line-height: 53px; }
.launch span { width: 298px; background: #f90; text-align: center; white-space: nowrap; }
.launch .more { width: 72px; display: flex; align-items: center; padding-left: 22px; }
.more svg { width: 20px; height: 16px; }

.filters { height: 80px; padding-top: 24px; display: flex; }
.field { height: 56px; border: 2px solid #8c8c94; border-radius: 16px; background: #fff; display: flex; align-items: center; line-height: 48px; padding: 0 24px; }
.find { width: 1296px; color: #656871; }
.find em { font-size: 28.2px; margin-left: 18px; padding-bottom: 1px; white-space: nowrap; }
.pick { width: 206px; margin-left: 28px; }
.pick svg { width: 20px; height: 16px; color: #006ce0; margin: 0 6px 0 auto; }
.pager { margin: -8px 12px 0 auto; height: 56px; display: flex; align-items: center; color: #b4b4bb; }
.pager b { margin: -2px 42px 0 41px; font-size: 26px; width: 16px; text-align: center; line-height: 40px; color: #0f141a; font-weight: 600; }
.pager i { width: 2px; height: 56px; background: #c6c6cd; margin: 0 28px 0 27px; }
.pager .cog { color: #424650; }

.table { overflow: hidden; }
.tr { display: grid; grid-template-columns: 80px 530px 400px 320px 300px 300px 260px 400px; height: 64px; border-bottom: 2px solid #ebebf0; }
.tr > div { padding-left: 32px; display: flex; align-items: center; white-space: nowrap; overflow: hidden; line-height: 60px; height: 62px; }
.tr > .check { padding: 2px 0 0 25px; }
.check i { width: 32px; height: 32px; border: 2px solid #8c8c94; border-radius: 6px; background: #fff; }
.tr.first { height: 66px; padding-top: 2px; }
.tr.last { border-bottom: 0; height: 62px; }
.tr > .nm { font-size: 26.6px; }
.tr.th { height: 72px; border-bottom-color: #c6c6cd; }
.tr.th > div { height: 58px; margin-top: 4px; padding-top: 10px; position: relative; font-weight: 600; font-size: 26.7px; color: #424650; }
.tr.th > .check { padding-top: 8px; }
.th > div::after { content: ""; position: absolute; right: 0; top: 14px; width: 4px; height: 36px; background: #8c8c94; }
.th > .check::after { background: #c6c6cd; }
.pen { margin-left: 10px; }
.sort { width: 20px; height: 16px; margin: 0 30px 0 auto; }
.id { color: #006ce0; font-size: 27.8px; }
.digits { letter-spacing: .4px; }
.state, .good { color: #00802f; }
.state svg, .good svg { width: 32px; height: 32px; margin: 1px 9px 0 0; }
.tr > .state { font-size: 26.3px; }
.state .z1, .state .z2 { color: #006ce0; margin: -3px 0 0 22px; }
.state .z2 { margin-left: 16px; }
.tr > .good { width: 298px; letter-spacing: .25px; }
.alarm { color: #006ce0; font-weight: 600; font-size: 27.3px; }
.alarm svg { width: 24px; height: 24px; margin: 2px 0 0 13px; }
.hscroll { margin-top: 10px; padding: 0 9px; display: flex; align-items: center; }
.hthumb { width: 823px; height: 18px; margin: 0 auto 0 13px; border-radius: 9px; background: #8b8b8b; }

.split { height: 647px; border-top: 2px solid #c6c6cd; background: #fff; color: #424650; }
.grip { display: block; width: 28px; height: 4px; margin: 18px auto 0; border-radius: 2px; background: #424650; }
.splithead { height: 68px; padding: 0 46px 0 32px; display: flex; align-items: center; }
.splithead h2 { margin: -2px auto 0 0; font-size: 33.8px; line-height: 60px; color: #0f141a; }
.splithead i { width: 2px; height: 48px; background: #c6c6cd; margin: 0 22px 0 20px; }

/* AWS footer */
.awsfoot { height: 70px; flex: none; padding: 0 32px; background: #161d26; border-top: 2px solid #424650; color: #ebebf0; display: flex; align-items: center; font-size: 23.3px; line-height: 40px; white-space: nowrap; }
.awsfoot span { padding-bottom: 3px; }
.cs { margin-left: 10px; width: 167px; }
.copy { margin-left: auto; width: 608px; color: #c6c6cd; }
.pr { width: 128px; }
.te { width: 116px; }
.co { font-size: 22.9px; }

/* Taskbar */
.taskbar { height: 96px; flex: none; border-top: 2px solid #484440; display: flex; align-items: center; color: #fff;
  background: linear-gradient(90deg, #202020 0, #212120 440px, #2c2416 540px, #35211a 800px, #362119 980px, #30231a 1240px, #2c2517 1460px, #33221a 1720px, #3b1f18 2000px, #26241e 2080px, #2c2619 2180px, #2f231a 2270px, #232220 2390px, #202020 2500px); }
.weather { width: 48px; height: 48px; margin: 0 0 0 44px; position: relative; }
.weather b { position: absolute; left: 18px; top: -12px; width: 32px; height: 32px; border-radius: 50%; background: #ff99a4; color: #1a1a1a; font-size: 21px; font-weight: 400; line-height: 31px; text-align: center; }
.start { margin: 1px 0 0 369px; }
.tasksearch { width: 438px; height: 64px; margin-left: 28px; padding-left: 20px; border: 2px solid rgba(255,255,255,.13); border-radius: 32px; background: rgba(255,255,255,.13); display: flex; align-items: center; }
.tasksearch span { margin-left: 21px; line-height: 40px; font-size: 25.8px; color: #d8d4d0; }
.earth { margin: 0 27px 0 auto; }
.apps-row { display: flex; margin-left: 10px; gap: 10px; }
.app { width: 78px; height: 80px; display: flex; align-items: center; justify-content: center; position: relative; }
.app > svg { width: 48px; height: 48px; }
.app.current { border-radius: 8px; background: rgba(255,255,255,.09); border: 2px solid rgba(255,255,255,.06); }
.app > i { position: absolute; bottom: 2px; left: 33px; width: 12px; height: 6px; border-radius: 3px; background: #a59d99; }
.app.current > i { left: 22px; bottom: 0; width: 30px; background: #4cc2ff; }
.app > b { position: absolute; right: 15px; bottom: 16px; width: 32px; height: 14px; border-radius: 2px; background: #000; font-size: 11.5px; line-height: 14px; text-align: center; letter-spacing: -.3px; }
.tray { margin: 0 39px 0 auto; display: flex; align-items: center; font-size: 23.5px; line-height: 32px; white-space: nowrap; }
.od { margin-left: 37px; }
.lang { width: 60px; margin-left: 30px; text-align: center; padding-bottom: 3px; font-size: 24px; }
.wifi { margin-left: 30px; }
.vol { margin-left: 14px; }
.bat { margin-left: 15px; }
.clock { width: 140px; margin-left: 15px; text-align: right; padding-bottom: 3px; }
```
